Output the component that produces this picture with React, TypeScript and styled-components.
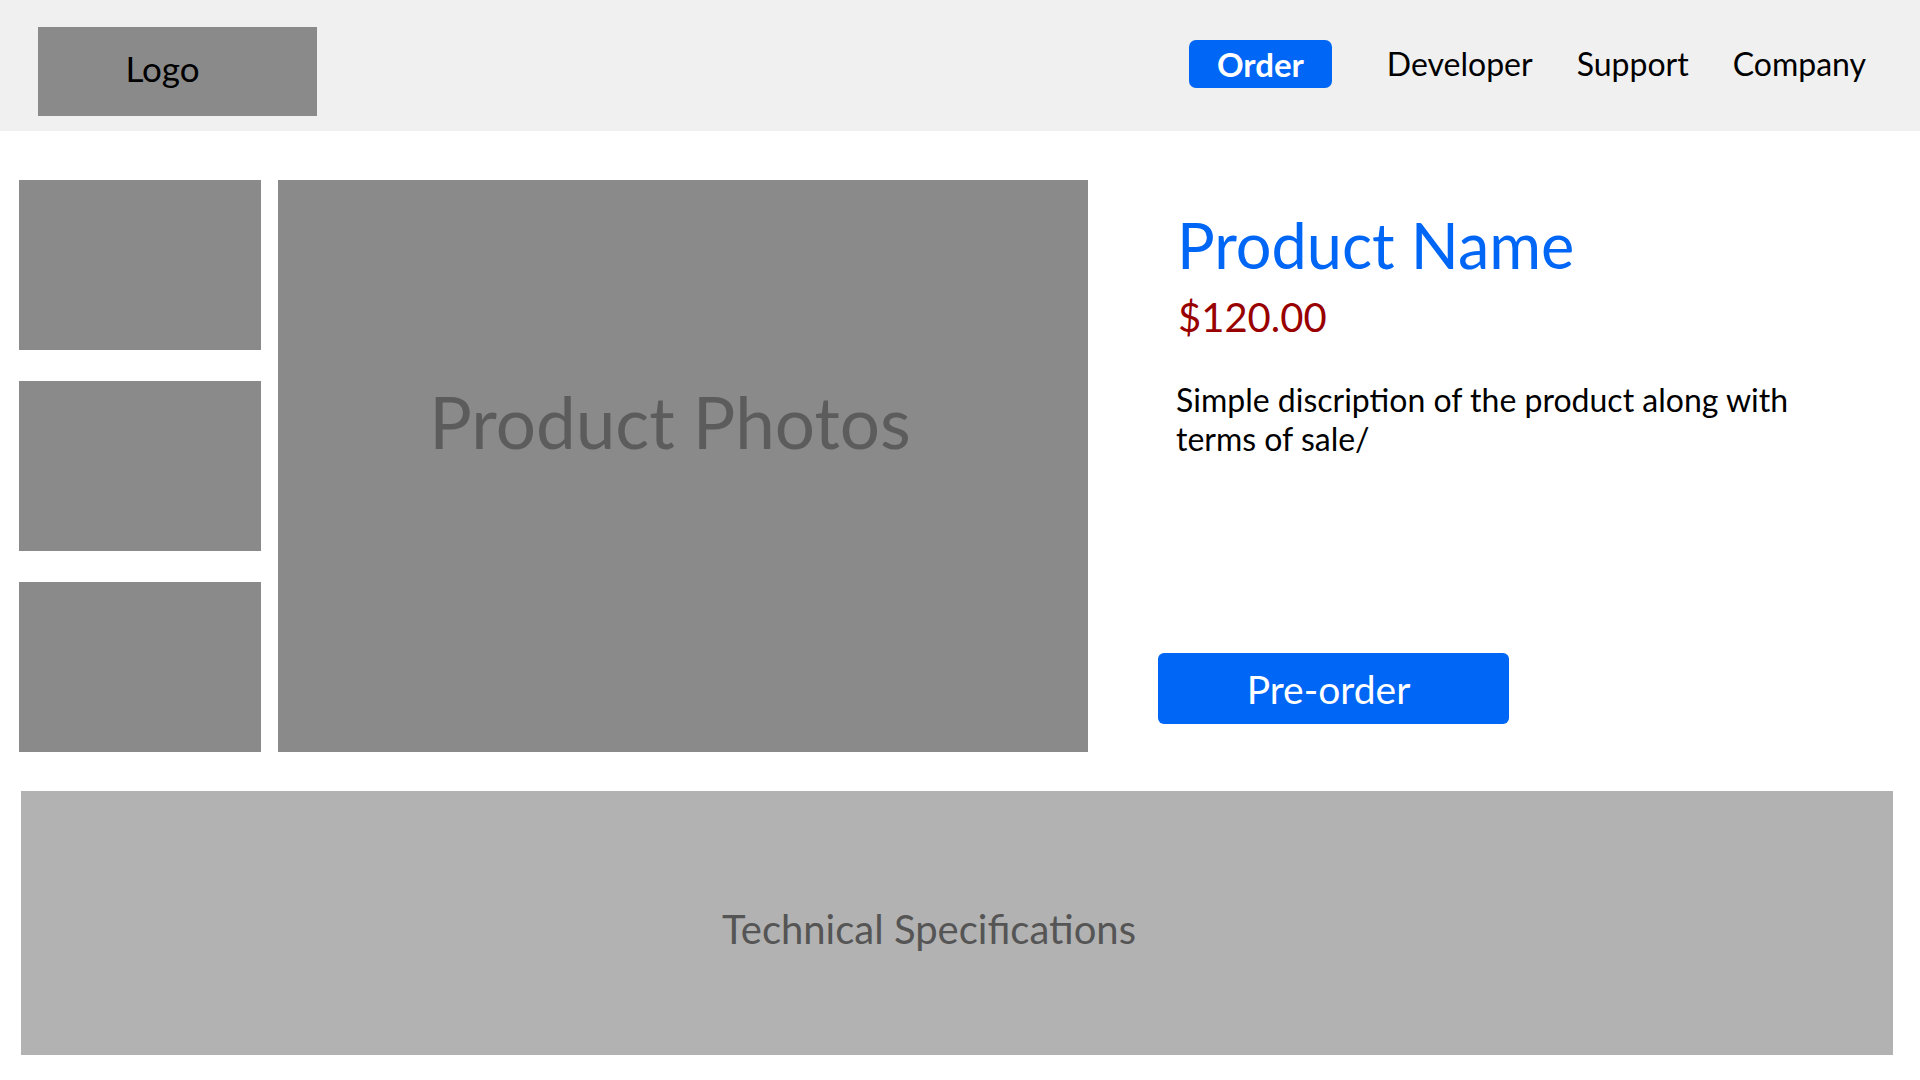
import React from "react";
import styled, { createGlobalStyle } from "styled-components";

const GlobalStyle = createGlobalStyle`
  html, body {
    margin: 0;
    padding: 0;
    background: #ffffff;
    font-family: Lato, "Open Sans", sans-serif;
  }
  * {
    box-sizing: border-box;
  }
`;

const Page = styled.div`
  width: 1920px;
  min-height: 1080px;
  background: #ffffff;
`;

const Header = styled.header`
  height: 131px;
  background: #f0f0f0;
  display: flex;
  justify-content: space-between;
  align-items: flex-start;
  padding: 27px 54px 0 38px;
`;

const Logo = styled.div`
  width: 279px;
  height: 89px;
  background: #8a8a8a;
  display: flex;
  align-items: center;
  justify-content: center;
  padding: 0 30px 8px 0;
  font-size: 35px;
  color: #000;
`;

const Nav = styled.nav`
  display: flex;
  align-items: center;
  gap: 44px;
  margin-top: 13px;
`;

const OrderButton = styled.button`
  width: 143px;
  height: 48px;
  border: none;
  border-radius: 7px;
  background: #0066f5;
  color: #fff;
  font-family: Lato, sans-serif;
  font-weight: 700;
  font-size: 33px;
  margin-right: 11px;
  padding: 0;
  cursor: pointer;
`;

const NavLink = styled.a`
  font-size: 32px;
  color: #000;
  text-decoration: none;
  line-height: 48px;
`;

const Main = styled.main`
  display: flex;
  padding: 49px 0 0 19px;
  height: 621px;
`;

const Thumbs = styled.div`
  display: flex;
  flex-direction: column;
  gap: 31px;
  width: 242px;
`;

const Thumb = styled.div`
  height: 170px;
  background: #8a8a8a;
`;

const Photo = styled.div`
  margin-left: 17px;
  width: 810px;
  height: 572px;
  background: #8a8a8a;
  display: flex;
  justify-content: center;
  align-items: flex-start;
  padding: 206px 26px 0 0;
  font-size: 71px;
  line-height: 71px;
  color: #5c5c5c;
`;

const Info = styled.section`
  margin-left: 70px;
  width: 700px;
  height: 572px;
  display: flex;
  flex-direction: column;
  padding-top: 27px;
`;

const Title = styled.h1`
  margin: 0 0 0 19px;
  font-weight: 400;
  font-size: 63px;
  line-height: 76px;
  color: #0066f5;
`;

const Price = styled.div`
  margin: 10px 0 0 20px;
  font-size: 40px;
  line-height: 48px;
  color: #990000;
`;

const Description = styled.p`
  margin: 39px 0 0 18px;
  width: 660px;
  font-size: 32px;
  line-height: 39px;
  color: #000;
`;

const PreOrder = styled.button`
  margin-top: auto;
  margin-bottom: 28px;
  width: 351px;
  height: 71px;
  border: none;
  border-radius: 6px;
  background: #0066f5;
  color: #fff;
  font-family: Lato, sans-serif;
  font-size: 39px;
  padding: 0 10px 0 0;
  cursor: pointer;
`;

const Specs = styled.div`
  margin: 39px 0 0 21px;
  width: 1872px;
  height: 264px;
  background: #b2b2b2;
  display: flex;
  align-items: center;
  justify-content: center;
  padding: 12px 56px 0 0;
  font-size: 40px;
  color: #555555;
`;

export default function App() {
  return (
    <Page>
      <GlobalStyle />
      <Header>
        <Logo>Logo</Logo>
        <Nav>
          <OrderButton>Order</OrderButton>
          <NavLink href="#">Developer</NavLink>
          <NavLink href="#">Support</NavLink>
          <NavLink href="#">Company</NavLink>
        </Nav>
      </Header>
      <Main>
        <Thumbs>
          <Thumb />
          <Thumb />
          <Thumb />
        </Thumbs>
        <Photo>Product Photos</Photo>
        <Info>
          <Title>Product Name</Title>
          <Price>$120.00</Price>
          <Description>
            Simple discription of the product along with terms of sale/
          </Description>
          <PreOrder>Pre-order</PreOrder>
        </Info>
      </Main>
      <Specs>Technical Specifications</Specs>
    </Page>
  );
}
